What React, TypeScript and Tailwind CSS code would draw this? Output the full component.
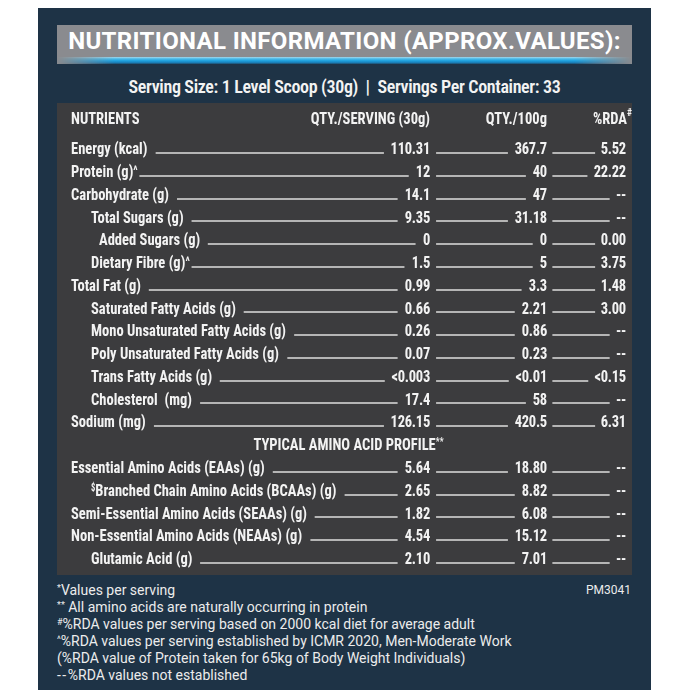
import React from 'react';

type Row = {
  label: React.ReactNode;
  indent?: 0 | 1 | 2;
  tight?: boolean;
  v: [string, string, string];
};

const rows: Row[] = [
  { label: 'Energy (kcal)', v: ['110.31', '367.7', '5.52'] },
  { label: <>Protein (g)<Caret /></>, tight: true, v: ['12', '40', '22.22'] },
  { label: 'Carbohydrate (g)', v: ['14.1', '47', '--'] },
  { label: 'Total Sugars (g)', indent: 1, v: ['9.35', '31.18', '--'] },
  { label: 'Added Sugars (g)', indent: 2, v: ['0', '0', '0.00'] },
  { label: <>Dietary Fibre (g)<Caret /></>, indent: 1, tight: true, v: ['1.5', '5', '3.75'] },
  { label: 'Total Fat (g)', v: ['0.99', '3.3', '1.48'] },
  { label: 'Saturated Fatty Acids (g)', indent: 1, v: ['0.66', '2.21', '3.00'] },
  { label: 'Mono Unsaturated Fatty Acids (g)', indent: 1, v: ['0.26', '0.86', '--'] },
  { label: 'Poly Unsaturated Fatty Acids (g)', indent: 1, v: ['0.07', '0.23', '--'] },
  { label: 'Trans Fatty Acids (g)', indent: 1, v: ['<0.003', '<0.01', '<0.15'] },
  { label: 'Cholesterol\u00a0 (mg)', indent: 1, v: ['17.4', '58', '--'] },
  { label: 'Sodium (mg)', v: ['126.15', '420.5', '6.31'] },
];

const aminoRows: Row[] = [
  { label: 'Essential Amino Acids (EAAs) (g)', v: ['5.64', '18.80', '--'] },
  {
    label: <><sup className="text-[10px]">$</sup>Branched Chain Amino Acids (BCAAs) (g)</>,
    indent: 1,
    v: ['2.65', '8.82', '--'],
  },
  { label: 'Semi-Essential Amino Acids (SEAAs) (g)', v: ['1.82', '6.08', '--'] },
  { label: 'Non-Essential Amino Acids (NEAAs) (g)', v: ['4.54', '15.12', '--'] },
  { label: 'Glutamic Acid (g)', indent: 1, v: ['2.10', '7.01', '--'] },
];

function Caret() {
  return <sup className="text-[13px] top-[-0.15em]">^</sup>;
}

// leader rule sitting just above the baseline
function Leader({ className = '' }: { className?: string }) {
  return (
    <div className={`flex-1 flex flex-col justify-end pb-[6px] ${className}`}>
      <div className="h-[2px] bg-[#b5b5b5]" />
    </div>
  );
}

// widths below are before the table's horizontal squeeze (x0.855)
const indents = ['pl-0', 'pl-[23.4px]', 'pl-[32.7px]'];

function Value({ children }: { children: React.ReactNode }) {
  return <span className="tracking-[-0.3px]">{children}</span>;
}

function NutrientRow({ row }: { row: Row }) {
  return (
    <div className="grid grid-cols-[419.9px_136.8px_92.4px] h-[22.78px] leading-[22.78px]">
      <div className="flex">
        <span className={`whitespace-nowrap ${indents[row.indent ?? 0]}`}>{row.label}</span>
        <Leader className={`${row.tight ? 'ml-[2.3px]' : 'ml-[9.4px]'} mr-[8.2px]`} />
        <Value>{row.v[0]}</Value>
      </div>
      <div className="flex">
        <Leader className="ml-[7px] mr-[8.2px]" />
        <Value>{row.v[1]}</Value>
      </div>
      <div className="flex">
        <Leader className="ml-[5.9px] mr-[7px]" />
        <Value>{row.v[2]}</Value>
      </div>
    </div>
  );
}

export default function App() {
  return (
    <div className="bg-white min-h-[700px] pt-[8px] pl-[38px] font-['Roboto',sans-serif]">
      <div className="w-[613px] h-[682px] bg-[#1e3346] text-[#f3f3f3] flex flex-col">
        {/* Title bar */}
        <div className="mx-[19px] mt-[17px] h-[39px] bg-[#8a8b8f] flex flex-col">
          <div className="h-[34px] flex items-center justify-center text-[24px] font-bold leading-none tracking-[0.35px] text-white">
            NUTRITIONAL INFORMATION (APPROX.VALUES):
          </div>
          <div className="h-[7px] bg-[linear-gradient(180deg,#a9d8ea_0%,#4dbbe9_25%,#1c9fdd_55%,#1b7fb8_80%,#1f4d6c_100%)] [mask-image:linear-gradient(90deg,transparent,black_10%,black_90%,transparent)]" />
        </div>

        {/* Serving line */}
        <div className="mt-[11px] text-center text-[18px] leading-[24px] font-semibold [font-stretch:75%] tracking-[-0.35px]">
          Serving Size: 1 Level Scoop (30g)&nbsp; |&nbsp; Servings Per Container: 33
        </div>

        {/* Table */}
        <div className="mx-[19px] mt-[3.5px] bg-[#3c3c3e] pl-[14px] pr-[8px] pt-[4px] pb-[5.4px] overflow-hidden text-[17px] font-bold [font-stretch:75%]">
          <div className="w-[649.1px] origin-left scale-x-[0.855]">
            <div className="grid grid-cols-[419.9px_136.8px_92.4px] h-[22.78px] leading-[22.78px] mb-[8px]">
              <div className="flex justify-between">
                <span>NUTRIENTS</span>
                <span>QTY./SERVING (30g)</span>
              </div>
              <div className="text-right">QTY./100g</div>
              <div className="text-right">
                %RDA<sup className="text-[11px] top-[-0.7em] mr-[-7px]">#</sup>
              </div>
            </div>
            {rows.map((r, i) => (
              <NutrientRow key={i} row={r} />
            ))}
            <div className="h-[22.78px] leading-[22.78px] text-center">
              TYPICAL AMINO ACID PROFILE<sup className="text-[10px]">**</sup>
            </div>
            {aminoRows.map((r, i) => (
              <NutrientRow key={i} row={r} />
            ))}
          </div>
        </div>

        {/* Footnotes */}
        <div className="px-[19px] mt-[7px] text-[14px] leading-[17px] [font-stretch:90%] text-[#ececec]">
          <div className="flex justify-between">
            <span><sup className="text-[9px]">*</sup>Values per serving</span>
            <span className="text-[12px] pr-[1px]">PM3041</span>
          </div>
          <div><sup className="text-[9px]">**</sup> All amino acids are naturally occurring in protein</div>
          <div><sup className="text-[9px]">#</sup>%RDA values per serving based on 2000 kcal diet for average adult</div>
          <div><sup className="text-[9px]">^</sup>%RDA values per serving established by ICMR 2020, Men-Moderate Work</div>
          <div>(%RDA value of Protein taken for 65kg of Body Weight Individuals)</div>
          <div><span className="tracking-[1.5px]">--</span>%RDA values not established</div>
        </div>
      </div>
    </div>
  );
}
